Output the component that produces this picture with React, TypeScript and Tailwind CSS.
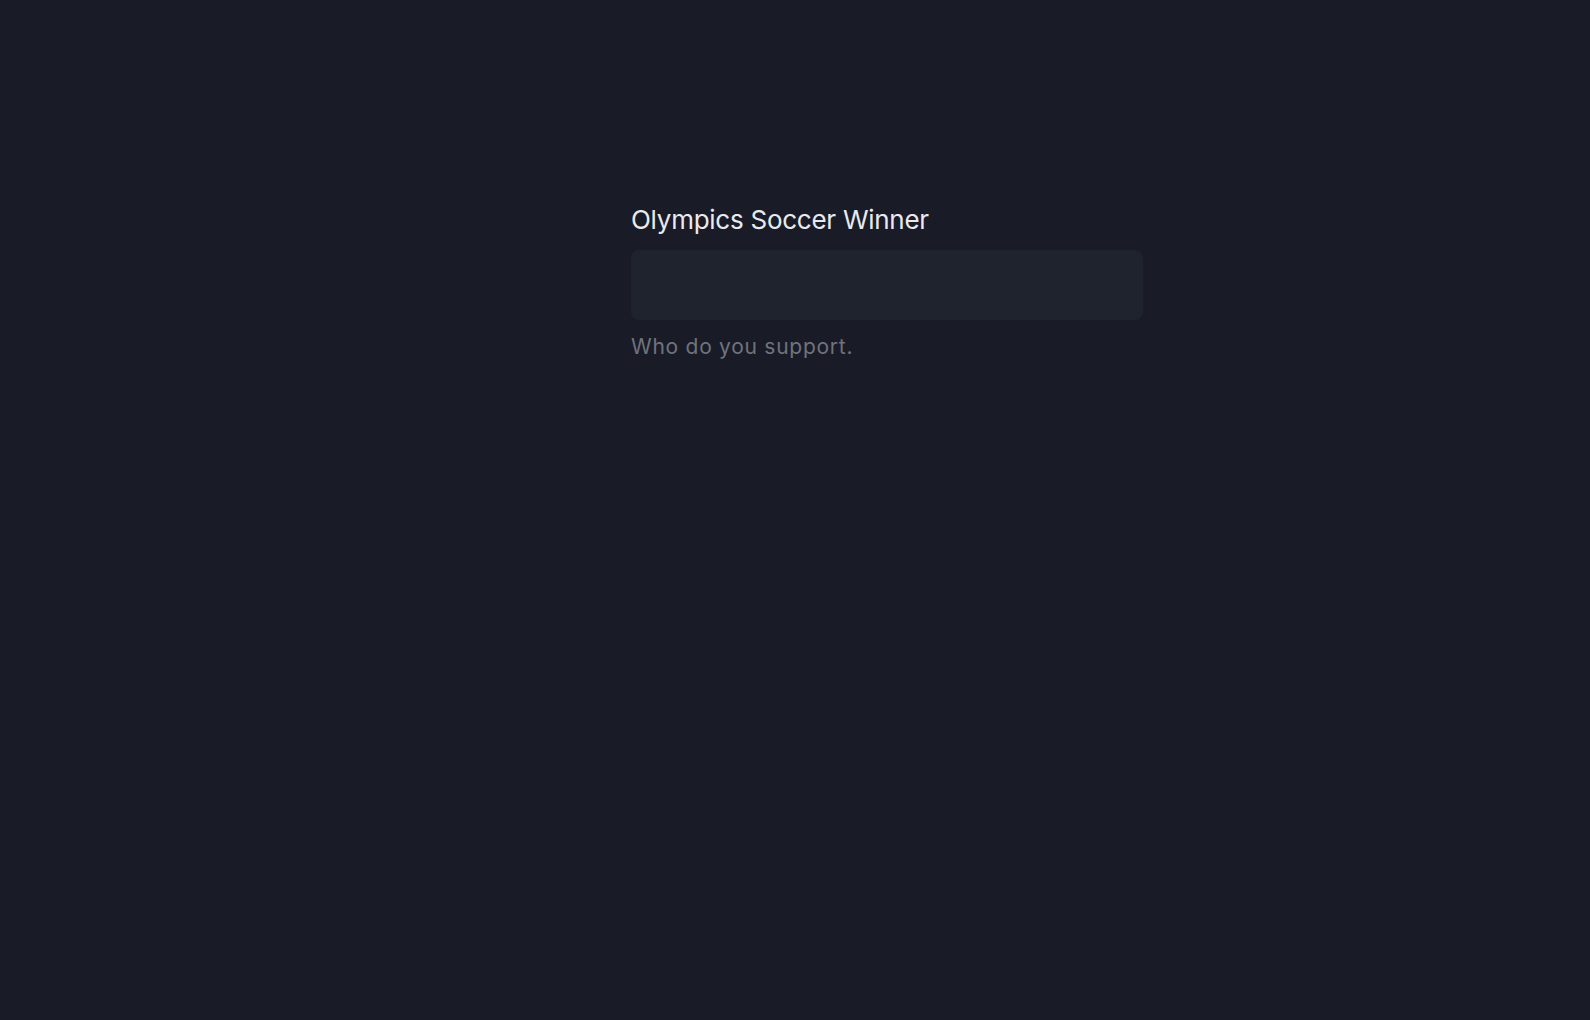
export default function App() {
  return (
    <div
      className="min-h-screen bg-[#191c27] pl-[631px] pt-[204px]"
      style={{ fontFamily: 'Inter, "Noto Sans", sans-serif' }}
    >
      <div className="flex w-[512px] flex-col">
        <label className="text-[26px] leading-8 tracking-[-0.01em] text-[#e8eaf0]">Olympics Soccer Winner</label>
        <div className="mt-[14px] h-[70px] rounded-lg bg-[#1f232d]"></div>
        <p className="mt-[13px] text-[21px] leading-7 tracking-[0.035em] text-[#70737d]">Who do you support.</p>
      </div>
    </div>
  );
}
